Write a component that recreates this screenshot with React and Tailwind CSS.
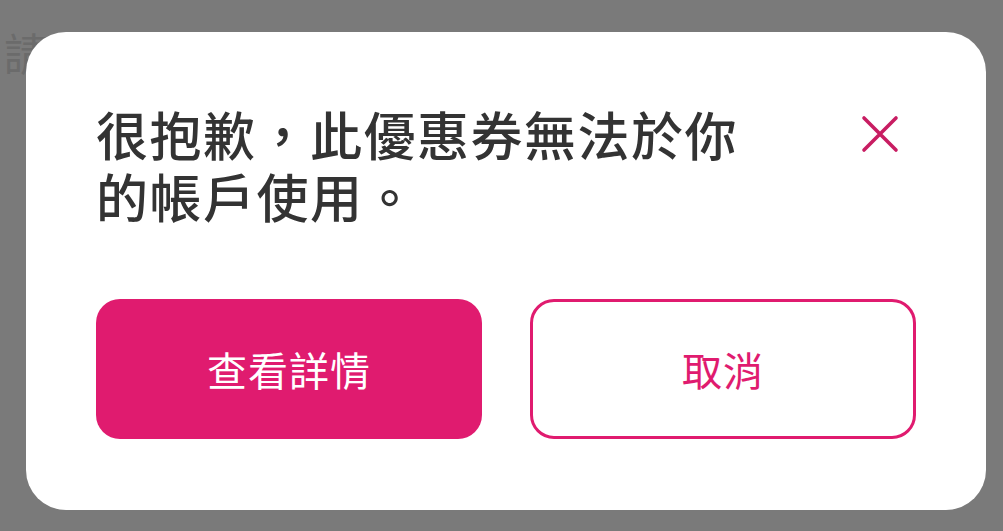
import React from "react";

const cjk = { fontFamily: '"Noto Sans CJK TC", "Noto Sans", sans-serif' };

function CloseIcon() {
  return (
    <svg viewBox="0 0 40 40" className="h-[40px] w-[40px]" fill="none">
      <path
        d="M4 4L36 36M36 4L4 36"
        stroke="#c81d62"
        strokeWidth="3.6"
        strokeLinecap="round"
      />
    </svg>
  );
}

export default function App() {
  return (
    <div
      className="relative h-[531px] w-full overflow-hidden bg-[#7a7a7a]"
      style={cjk}
    >
      {/* page text showing under the dimmed overlay */}
      <div className="absolute left-[4px] top-[30px] text-[44px] leading-none text-[#6b6b6b]">
        請
      </div>

      <div className="relative pl-[26px] pt-[32px]">
        <div className="flex h-[478px] w-[960px] flex-col rounded-[40px] bg-white px-[70px] pt-[71px]">
          <div className="flex items-start justify-between">
            <h1 className="text-[52px] font-medium leading-[62px] tracking-[1.5px] text-[#333333]">
              <span className="block">很抱歉，此優惠券無法於你</span>
              <span className="block">的帳戶使用。</span>
            </h1>
            <button className="mr-[16px] mt-[11px]">
              <CloseIcon />
            </button>
          </div>

          <div className="mt-[72px] grid grid-cols-2 gap-[48px]">
            <button className="flex h-[140px] items-center justify-center rounded-[24px] bg-[#e01b6f] text-[40px] font-normal tracking-[1px] text-white">
              查看詳情
            </button>
            <button className="flex h-[140px] items-center justify-center rounded-[24px] border-[3px] border-[#e01b6f] bg-white text-[40px] font-normal tracking-[1px] text-[#e01b6f]">
              取消
            </button>
          </div>
        </div>
      </div>
    </div>
  );
}
